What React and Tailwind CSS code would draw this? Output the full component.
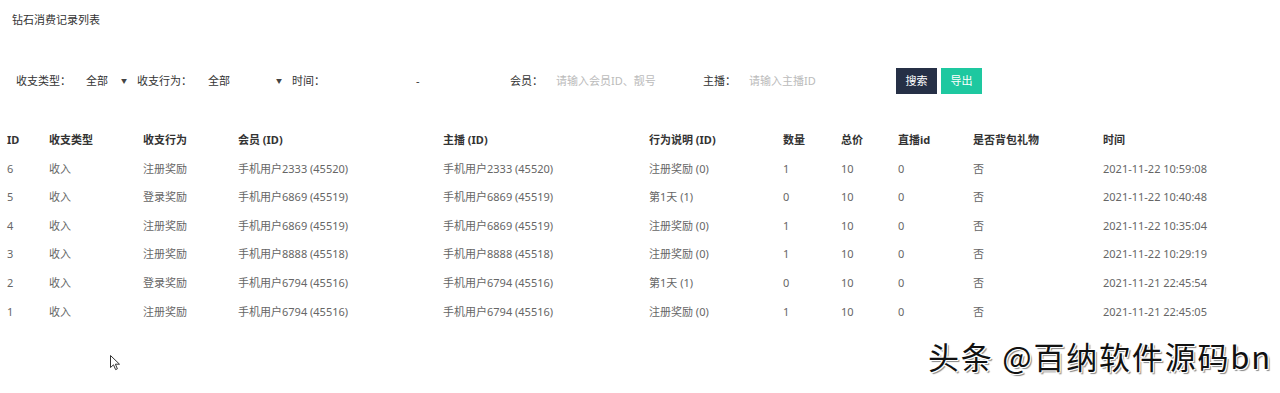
import React from "react";

const rows = [
  { id: 6, type: "收入", act: "注册奖励", member: "手机用户2333 (45520)", anchor: "手机用户2333 (45520)", desc: "注册奖励 (0)", qty: 1, total: 10, live: 0, bag: "否", time: "2021-11-22 10:59:08" },
  { id: 5, type: "收入", act: "登录奖励", member: "手机用户6869 (45519)", anchor: "手机用户6869 (45519)", desc: "第1天 (1)", qty: 0, total: 10, live: 0, bag: "否", time: "2021-11-22 10:40:48" },
  { id: 4, type: "收入", act: "注册奖励", member: "手机用户6869 (45519)", anchor: "手机用户6869 (45519)", desc: "注册奖励 (0)", qty: 1, total: 10, live: 0, bag: "否", time: "2021-11-22 10:35:04" },
  { id: 3, type: "收入", act: "注册奖励", member: "手机用户8888 (45518)", anchor: "手机用户8888 (45518)", desc: "注册奖励 (0)", qty: 1, total: 10, live: 0, bag: "否", time: "2021-11-22 10:29:19" },
  { id: 2, type: "收入", act: "登录奖励", member: "手机用户6794 (45516)", anchor: "手机用户6794 (45516)", desc: "第1天 (1)", qty: 0, total: 10, live: 0, bag: "否", time: "2021-11-21 22:45:54" },
  { id: 1, type: "收入", act: "注册奖励", member: "手机用户6794 (45516)", anchor: "手机用户6794 (45516)", desc: "注册奖励 (0)", qty: 1, total: 10, live: 0, bag: "否", time: "2021-11-21 22:45:05" },
];

const cols = [
  { key: "id", label: "ID", w: "w-[42px]" },
  { key: "type", label: "收支类型", w: "w-[94px]" },
  { key: "act", label: "收支行为", w: "w-[95px]" },
  { key: "member", label: "会员 (ID)", w: "w-[205px]" },
  { key: "anchor", label: "主播 (ID)", w: "w-[206px]" },
  { key: "desc", label: "行为说明 (ID)", w: "w-[134px]" },
  { key: "qty", label: "数量", w: "w-[58px]" },
  { key: "total", label: "总价", w: "w-[57px]" },
  { key: "live", label: "直播id", w: "w-[75px]" },
  { key: "bag", label: "是否背包礼物", w: "w-[130px]" },
  { key: "time", label: "时间", w: "w-[184px]" },
];

function Caret() {
  return <span className="text-[6px] text-[#444] leading-none">▼</span>;
}

export default function App() {
  return (
    <div className="relative w-[1280px] h-[393px] overflow-hidden bg-white text-[11px] text-[#666] font-['Noto_Sans','Noto_Sans_CJK_SC',sans-serif]">
      {/* 标题 */}
      <div className="pl-[12px] pt-[12px] h-[68px] text-[#333]">钻石消费记录列表</div>

      {/* 筛选 */}
      <div className="flex items-center h-[26px] pl-[16px] text-[#333]">
        <span className="w-[70px]">收支类型：</span>
        <div className="w-[51px] flex items-center justify-between pr-[10px]">
          <span>全部</span>
          <Caret />
        </div>
        <span className="w-[71px]">收支行为：</span>
        <div className="w-[84px] flex items-center justify-between pr-[10px]">
          <span>全部</span>
          <Caret />
        </div>
        <span className="w-[124px]">时间：</span>
        <span className="w-[94px]">-</span>
        <span className="w-[46px]">会员：</span>
        <span className="w-[147px] text-[#bbb]">请输入会员ID、靓号</span>
        <span className="w-[46px]">主播：</span>
        <span className="w-[147px] text-[#bbb]">请输入主播ID</span>
        <button className="w-[41px] h-[26px] bg-[#263046] text-white">搜索</button>
        <button className="ml-[4px] w-[41px] h-[26px] bg-[#1ec8a0] text-white">导出</button>
      </div>

      {/* 列表 */}
      <table className="mt-[32px] table-fixed border-collapse">
        <thead>
          <tr className="h-[28.6px]">
            {cols.map((c) => (
              <th key={c.key} className={`${c.w} pl-[7px] p-0 text-left font-bold text-[#333]`}>
                {c.label}
              </th>
            ))}
          </tr>
        </thead>
        <tbody>
          {rows.map((r) => (
            <tr key={r.id} className="h-[28.6px]">
              {cols.map((c) => (
                <td key={c.key} className="p-0 pl-[7px] text-left">
                  {r[c.key]}
                </td>
              ))}
            </tr>
          ))}
        </tbody>
      </table>

      {/* 鼠标 */}
      <svg className="absolute left-[110px] top-[355px]" width="11" height="16" viewBox="0 0 11 16">
        <path d="M0.5 0.5 L0.5 12.5 L3.5 9.8 L5.6 14.6 L7.4 13.8 L5.4 9.2 L9.5 9.2 Z" fill="#fff" stroke="#333" strokeWidth="1" />
      </svg>

      {/* 水印 */}
      <div className="absolute left-[928px] top-[340px] text-[31px] leading-none tracking-[1.8px] text-[#111] font-['Noto_Sans_CJK_SC',sans-serif] [text-shadow:1px_1px_0_#fff,-1px_-1px_0_#fff,1px_-1px_0_#fff,-1px_1px_0_#fff,2px_2px_1px_#888]">
        头条 @百纳软件源码bn
      </div>
    </div>
  );
}
